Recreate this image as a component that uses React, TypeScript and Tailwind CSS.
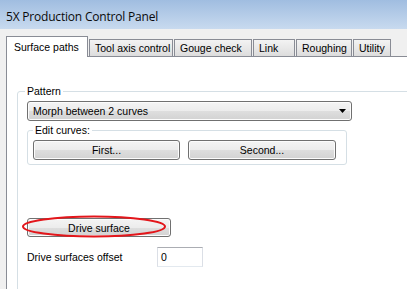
const tabs = [
  { label: 'Tool axis control', w: 'w-[84px]' },
  { label: 'Gouge check', w: 'w-[78px]' },
  { label: 'Link', w: 'w-[42px]' },
  { label: 'Roughing', w: 'w-[56px]' },
  { label: 'Utility', w: 'w-[38px]' },
]

const face =
  'flex items-center rounded-[3px] border border-[#707070] bg-[linear-gradient(#f4f4f4_0%,#ececec_50%,#dedede_51%,#d2d2d2_100%)] shadow-[inset_0_0_0_1px_#fcfcfc] text-black'
const btn = `${face} justify-center`

export default function App() {
  return (
    <div className="flex h-[289px] w-[407px] flex-col overflow-hidden bg-[#f0f0f0] font-['Liberation_Sans',Arial,sans-serif] text-[10.5px] leading-[12px] text-black">
      {/* Title bar */}
      <div className="flex h-[29px] shrink-0 items-center bg-[linear-gradient(#a0bde0,#c8daef)] pl-[6px] pt-[4px] font-['Open_Sans',sans-serif] text-[12px] tracking-[-0.2px] text-[#0a0a0a]">
        5X Production Control Panel
      </div>

      <div className="flex flex-1">
        <div className="w-[2px] bg-[#bdd3ed]" />

        <div className="flex flex-1 flex-col pl-[6px] pt-[7px]">
          {/* Tabs */}
          <div className="relative z-10 flex h-[20px] items-end">
            <div className="mb-[-1px] flex h-[21px] w-[82px] items-start border border-b-0 border-[#898c95] bg-white pl-[7px] pt-[4px]">
              Surface paths
            </div>
            {tabs.map(t => (
              <div
                key={t.label}
                className={`${t.w} ml-px flex h-[17px] items-center border border-b-0 border-[#898c95] bg-[linear-gradient(#f3f3f3,#e8e8e8_50%,#dcdcdc)] pl-[5px]`}
              >
                {t.label}
              </div>
            ))}
          </div>

          {/* Tab page */}
          <div className="flex-1 overflow-hidden border-l border-t border-[#898c95] bg-white pl-[10px] pt-[28px]">
            <fieldset className="w-[420px] rounded-tl-[3px] border border-[#d5dfe5] pb-[60px] pl-[9px] pr-[8px] pt-[4px]">
              <legend className="ml-[-2px] px-[2px] leading-[12px]">Pattern</legend>

              <div className={`${face} h-[20px] w-[325px] justify-between pl-[5px] pr-[5px]`}>
                <span>Morph between 2 curves</span>
                <svg width="7" height="4" viewBox="0 0 7 4">
                  <path d="M0 0h7L3.5 4z" fill="#000" />
                </svg>
              </div>

              <fieldset className="mt-[3px] w-[320px] rounded-[3px] border border-[#d5dfe5] pb-[4px] pl-[5px] pt-[4px]">
                <legend className="px-[2px] leading-[12px]">Edit curves:</legend>
                <div className="flex gap-[8px]">
                  <button className={`${btn} h-[20px] w-[147px]`}>First...</button>
                  <button className={`${btn} h-[20px] w-[148px]`}>Second...</button>
                </div>
              </fieldset>

              <div className="relative mt-[53px] w-[144px]">
                <button className={`${btn} h-[19px] w-[144px]`}>Drive surface</button>
                <svg className="absolute left-[-5px] top-[-3px]" width="146" height="24" viewBox="0 0 146 24">
                  <ellipse cx="72" cy="11.5" rx="71" ry="10" fill="none" stroke="#e3161b" strokeWidth="2" />
                </svg>
              </div>

              <div className="mt-[10px] flex items-center">
                <span className="w-[130px]">Drive surfaces offset</span>
                <div className="flex h-[20px] w-[46px] items-center border border-[#dbdfe6] border-t-[#abadb3] border-b-[#e3e9ef] pl-[3px]">
                  0
                </div>
              </div>
            </fieldset>
          </div>
        </div>
      </div>
    </div>
  )
}
